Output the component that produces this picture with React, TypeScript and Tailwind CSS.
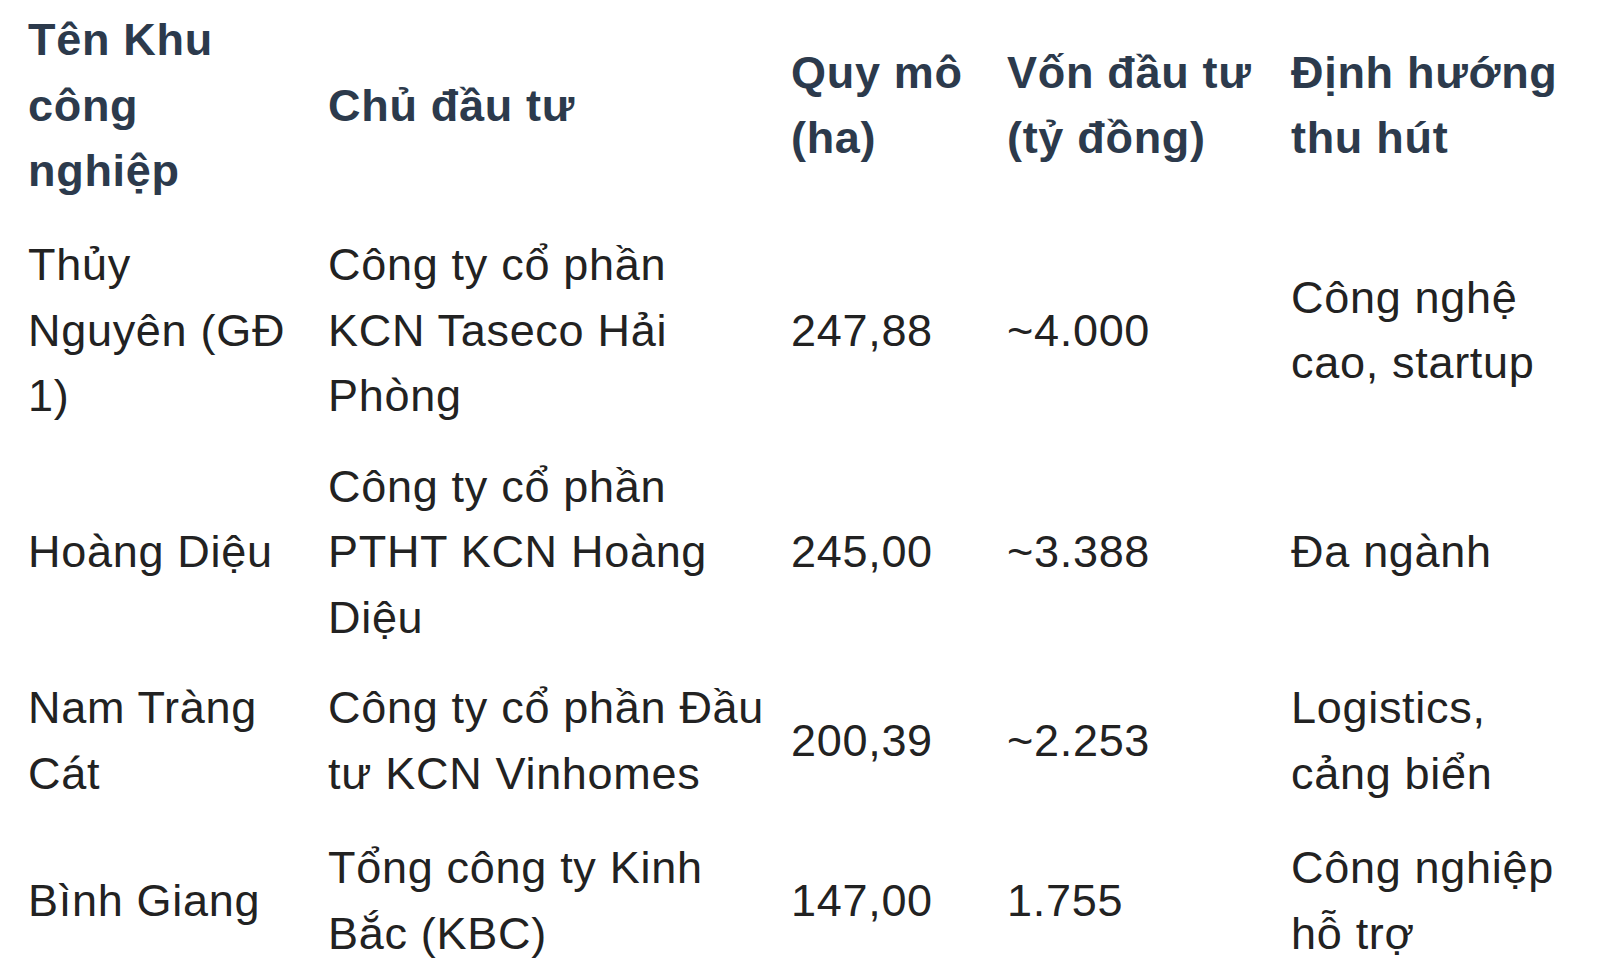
const headers: string[][] = [
  ['Tên Khu', 'công', 'nghiệp'],
  ['Chủ đầu tư'],
  ['Quy mô', '(ha)'],
  ['Vốn đầu tư', '(tỷ đồng)'],
  ['Định hướng', 'thu hút'],
];

const rows: string[][][] = [
  [
    ['Thủy', 'Nguyên (GĐ', '1)'],
    ['Công ty cổ phần', 'KCN Taseco Hải', 'Phòng'],
    ['247,88'],
    ['~4.000'],
    ['Công nghệ', 'cao, startup'],
  ],
  [
    ['Hoàng Diệu'],
    ['Công ty cổ phần', 'PTHT KCN Hoàng', 'Diệu'],
    ['245,00'],
    ['~3.388'],
    ['Đa ngành'],
  ],
  [
    ['Nam Tràng', 'Cát'],
    ['Công ty cổ phần Đầu', 'tư KCN Vinhomes'],
    ['200,39'],
    ['~2.253'],
    ['Logistics,', 'cảng biển'],
  ],
  [
    ['Bình Giang'],
    ['Tổng công ty Kinh', 'Bắc (KBC)'],
    ['147,00'],
    ['1.755'],
    ['Công nghiệp', 'hỗ trợ'],
  ],
];

function Lines({ lines }: { lines: string[] }) {
  return (
    <div>
      {lines.map((l, i) => (
        <span key={i} className="block whitespace-nowrap">
          {l}
        </span>
      ))}
    </div>
  );
}

const cols = 'grid grid-cols-[300px_463px_216px_284px_1fr] items-center';

export default function App() {
  return (
    <div className="w-[1600px] h-[980px] bg-white pl-[28px] overflow-hidden font-['Liberation_Sans',Arial,sans-serif] text-[45px] leading-[65.5px] tracking-[0.7px]">
      <div className={`${cols} pt-[7px] pb-[16px] font-bold text-[#2c3a4c]`}>
        {headers.map((h, i) => (
          <Lines key={i} lines={h} />
        ))}
      </div>
      {rows.map((r, ri) => (
        <div
          key={ri}
          className={`${cols} ${ri === 3 ? 'pt-[16.5px] pb-[12.5px]' : 'py-[12.5px]'} text-[#222222]`}
        >
          {r.map((c, ci) => (
            <Lines key={ci} lines={c} />
          ))}
        </div>
      ))}
    </div>
  );
}
